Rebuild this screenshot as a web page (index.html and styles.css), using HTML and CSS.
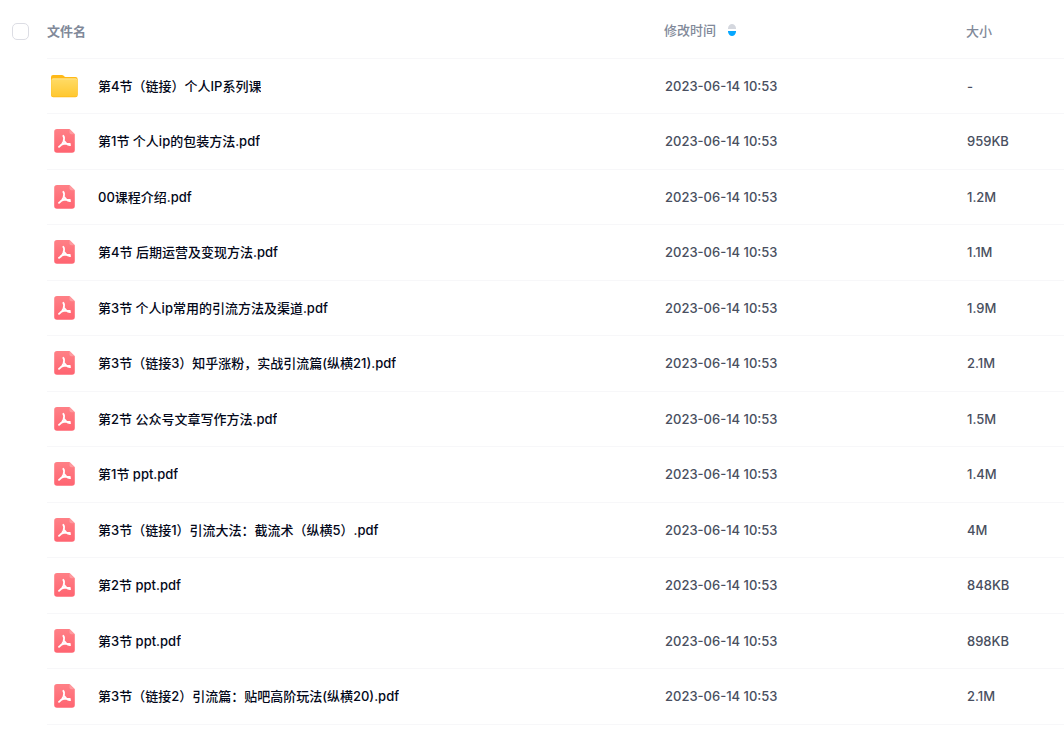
FILE: index.html
```html
<!DOCTYPE html>
<html lang="zh-CN">
<head>
  <meta charset="UTF-8">
  <meta name="viewport" content="width=device-width, initial-scale=1.0">
  <title>文件列表</title>
  <link rel="stylesheet" href="styles.css">
</head>
<body>
  <svg class="icon-defs" width="0" height="0" aria-hidden="true">
    <defs>
      <linearGradient id="folder-front" x1="0" y1="0" x2="0" y2="1">
        <stop offset="0" stop-color="#ffdb66"/>
        <stop offset="1" stop-color="#ffc830"/>
      </linearGradient>
      <linearGradient id="pdf-page" x1="0" y1="0" x2="0" y2="1">
        <stop offset="0" stop-color="#ff8086"/>
        <stop offset="1" stop-color="#ff6471"/>
      </linearGradient>
      <symbol id="icon-folder" viewBox="0 0 32 32">
        <path fill="#ffb917" d="M3 7a2 2 0 0 1 2-2h9c.6 0 1 .2 1.400.6l1 .9c.3.300.7.500 1.200.5H27.500A2.200 2.200 0 0 1 29.700 9.200V25a2.300 2.300 0 0 1-2.300 2.300H5.300A2.300 2.300 0 0 1 3 25z"/>
        <path fill="url(#folder-front)" d="M3.200 10.500a2 2 0 0 1 2-2h22.300a2 2 0 0 1 2 2v14a2 2 0 0 1-2 2H5.200a2 2 0 0 1-2-2z"/>
        <path fill="none" stroke="#ffe899" stroke-width=".8" d="M4 9.500c.3-.4.700-.6 1.200-.6h22.300c.5 0 .9.2 1.200.6"/>
      </symbol>
      <symbol id="icon-pdf" viewBox="0 0 32 32">
        <path fill="url(#pdf-page)" d="M6.200 6.800a2.800 2.800 0 0 1 2.800-2.800h12.500l5.300 5.300V25a2.800 2.800 0 0 1-2.800 2.800H9A2.800 2.800 0 0 1 6.200 25z"/>
        <path fill="#ff9a9f" d="M21.500 4l5.300 5.300h-3.500a1.800 1.800 0 0 1-1.800-1.800z"/>
        <path fill="none" stroke="#fff" stroke-width="1.800" stroke-linecap="round" stroke-linejoin="round" d="M15.300 10.800c1.300 1.400.8 3.700.3 5.400-.9 2.400-2.600 4.700-4.600 5.700M15.700 15.500c1.200 2.200 3.200 4 6.300 4.700M12.800 20c2.700-1.200 5.700-1.700 9-1"/>
      </symbol>
    </defs>
  </svg>

  <table class="file-table">
    <colgroup>
      <col class="col-check">
      <col class="col-name">
      <col class="col-time">
      <col class="col-size">
    </colgroup>
    <thead>
      <tr>
        <th class="cell-check"><input type="checkbox" class="checkbox" aria-label="全选"></th>
        <th class="head-name">文件名</th>
        <th><button type="button" class="sort-btn">修改时间
          <svg class="sort-icon" viewBox="0 0 10 14" aria-hidden="true">
            <path fill="#d4d7de" d="M1 6V5Q2 1 5 1t4 4v1z"/>
            <path fill="#06a7ff" d="M1 8v1q1 4 4 4t4-4V8z"/>
          </svg>
        </button></th>
        <th>大小</th>
      </tr>
    </thead>
    <tbody id="file-list"></tbody>
  </table>

  <script src="script.js"></script>
</body>
</html>
```
FILE: styles.css
```css
body {
  margin: 0;
  background: #fff;
  color: #03081a;
  font-family: Inter, "Noto Sans CJK SC", sans-serif;
  font-size: 13px;
  font-weight: 500;
  line-height: 20px;
}

.icon-defs {
  position: absolute;
}

.file-table {
  width: 100%;
  table-layout: fixed;
  border-collapse: separate;
  border-spacing: 0;
}

.col-check {
  width: 47px;
}

.col-time {
  width: 302px;
}

.col-size {
  width: 98px;
}

.file-table th,
.file-table td {
  box-sizing: border-box;
  height: 55px;
  padding: 0 0 1px 1px;
  border-bottom: 1px solid #f7f7f9;
  text-align: left;
  vertical-align: middle;
}

.file-table th {
  height: 59px;
  padding: 3px 0 0;
  color: #818999;
  font-weight: 500;
}

.file-table .head-name {
  font-weight: 700;
}

.file-table tbody tr:nth-child(even) td {
  height: 56px;
}

.file-table .cell-check {
  padding-left: 12px;
  border-bottom: none;
}

.checkbox {
  display: block;
  box-sizing: border-box;
  width: 17px;
  height: 17px;
  margin: 0;
  appearance: none;
  border: 1px solid #dcdde4;
  border-radius: 5px;
  background: #fff;
  cursor: pointer;
}

.checkbox:checked {
  border-color: #06a7ff;
  background: #06a7ff;
}

.sort-btn {
  display: flex;
  align-items: center;
  gap: 11px;
  padding: 0 0 2px;
  border: none;
  background: none;
  color: inherit;
  font: inherit;
  cursor: pointer;
}

.sort-icon {
  width: 10px;
  height: 14px;
}

.file {
  display: flex;
  align-items: center;
  gap: 18px;
}

.file-icon {
  flex: none;
  width: 32px;
  height: 32px;
}

.file-name {
  overflow: hidden;
  color: inherit;
  text-decoration: none;
  text-overflow: ellipsis;
  white-space: nowrap;
}

.file-name:hover {
  color: #06a7ff;
}

.cell-meta {
  color: #494f60;
}
```
FILE: script.js
```js
const files = [
  { name: '第4节（链接）个人IP系列课', type: 'folder', size: '-' },
  { name: '第1节 个人ip的包装方法.pdf', type: 'pdf', size: '959KB' },
  { name: '00课程介绍.pdf', type: 'pdf', size: '1.2M' },
  { name: '第4节 后期运营及变现方法.pdf', type: 'pdf', size: '1.1M' },
  { name: '第3节 个人ip常用的引流方法及渠道.pdf', type: 'pdf', size: '1.9M' },
  { name: '第3节（链接3）知乎涨粉，实战引流篇(纵横21).pdf', type: 'pdf', size: '2.1M' },
  { name: '第2节 公众号文章写作方法.pdf', type: 'pdf', size: '1.5M' },
  { name: '第1节 ppt.pdf', type: 'pdf', size: '1.4M' },
  { name: '第3节（链接1）引流大法：截流术（纵横5）.pdf', type: 'pdf', size: '4M' },
  { name: '第2节 ppt.pdf', type: 'pdf', size: '848KB' },
  { name: '第3节 ppt.pdf', type: 'pdf', size: '898KB' },
  { name: '第3节（链接2）引流篇：贴吧高阶玩法(纵横20).pdf', type: 'pdf', size: '2.1M' }
];

const modified = '2023-06-14 10:53';

document.getElementById('file-list').innerHTML = files.map(file => `
  <tr>
    <td class="cell-check"></td>
    <td>
      <div class="file">
        <svg class="file-icon" aria-hidden="true"><use href="#icon-${file.type}"></use></svg>
        <a class="file-name" href="#">${file.name}</a>
      </div>
    </td>
    <td class="cell-meta">${modified}</td>
    <td class="cell-meta">${file.size}</td>
  </tr>
`).join('');
```
